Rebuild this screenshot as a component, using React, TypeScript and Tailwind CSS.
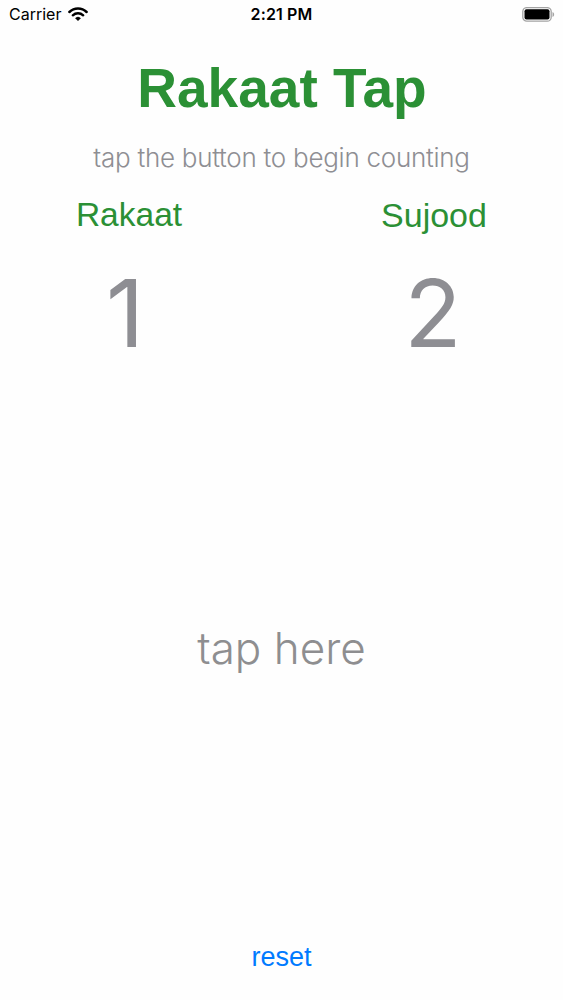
import { useState } from "react";

export default function App() {
  const [rakaat, setRakaat] = useState(1);
  const [sujood, setSujood] = useState(2);

  const handleTap = () => {
    if (sujood >= 2) {
      setRakaat(rakaat + 1);
      setSujood(1);
    } else {
      setSujood(sujood + 1);
    }
  };

  const handleReset = () => {
    setRakaat(1);
    setSujood(0);
  };

  return (
    <div className="flex h-[1000px] w-[563px] flex-col overflow-hidden bg-[#fefefe] font-['Liberation_Sans',sans-serif] text-[#8e8e93]">
      {/* Status bar */}
      <div className="grid h-[28px] shrink-0 grid-cols-3 items-center pr-2 pl-[9px] font-['Inter',sans-serif] text-black">
        <div className="flex items-center gap-[7px]">
          <span className="text-[16px] leading-none">Carrier</span>
          <svg width="20" height="14" viewBox="0 0 20 14">
            <path d="M10 13.8 L7.4 11.2 A3.8 3.8 0 0 1 12.6 11.2 Z" fill="black" stroke="black" strokeWidth="0.4" strokeLinejoin="round" />
            <path d="M4.8 8.3 A7.6 7.6 0 0 1 15.2 8.3" fill="none" stroke="black" strokeWidth="2.4" strokeLinecap="round" />
            <path d="M1.4 5 A12.4 12.4 0 0 1 18.6 5" fill="none" stroke="black" strokeWidth="2.5" strokeLinecap="round" />
          </svg>
        </div>
        <span className="pr-px text-center text-[16px] leading-none font-semibold tracking-[0.15px]">2:21 PM</span>
        <div className="flex justify-end">
          <svg width="33" height="15" viewBox="0 0 33 15">
            <rect x="0.8" y="0.6" width="28.4" height="13.6" rx="4" fill="none" stroke="#a3a3a3" strokeWidth="1.3" />
            <rect x="2.5" y="2.3" width="25" height="10.2" rx="2" fill="black" />
            <path d="M30.5 5 C32.7 6 32.7 9 30.5 10 Z" fill="#a3a3a3" />
          </svg>
        </div>
      </div>

      <h1 className="mt-[28px] pl-px text-center text-[55px] leading-[64px] font-bold text-[#2b9035]">Rakaat Tap</h1>
      <p className="mt-[22px] text-center font-['Inter',sans-serif] text-[26px] leading-[32px] font-light tracking-[-0.27px]">
        tap the button to begin counting
      </p>

      {/* Counters */}
      <div className="mt-[21px] flex justify-between px-[76px]">
        <div className="flex w-[106px] flex-col items-center">
          <h2 className="text-[33.5px] leading-[40px] text-[#2b9035]">Rakaat</h2>
          <div className="mt-[22px] pr-[8px] font-['Inter',sans-serif] text-[94px] leading-[112px]">{rakaat}</div>
        </div>
        <div className="flex w-[106px] flex-col items-center">
          <h2 className="text-[34px] leading-[40px] text-[#2b9035]">Sujood</h2>
          <div className="mt-[22px] pr-[2px] font-['Inter',sans-serif] text-[94px] leading-[112px]">{sujood}</div>
        </div>
      </div>

      <button
        onClick={handleTap}
        className="flex flex-1 items-center justify-center pb-[14px] font-['Inter',sans-serif] text-[44px] font-light text-[#8e8e90]"
      >
        tap here
      </button>
      <button onClick={handleReset} className="mb-[26px] h-[34px] text-[27px] leading-[34px] text-[#007aff]">
        reset
      </button>
    </div>
  );
}
